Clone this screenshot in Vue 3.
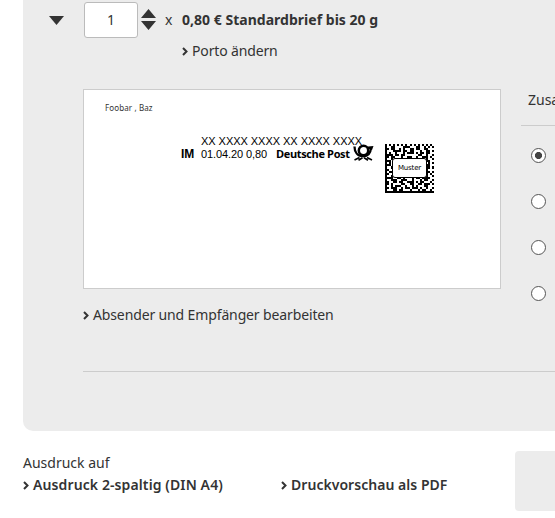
<script setup>
const matrix = [
  '#.#.#.#.#.#.#.#.#.#.#.#.',
  '#..##....###...##..#.#.#',
  '##.##..#.#..##.##..##...',
  '#...####.##.##...#..##.#',
  '#.#..#...#.###.#.##.##..',
  '####.##.##......##..#..#',
  '##.##...#..##..#..###.#.',
  '#..#................#..#',
  '###.................##..',
  '#.#..................#.#',
  '###.................##..',
  '#..#................##.#',
  '##..................#...',
  '#.##................##.#',
  '##..................#.#.',
  '#..#................#..#',
  '####..##.#...#.##.####..',
  '#..###..###..#...#.##..#',
  '##..##.##..###.#.##...#.',
  '##.#....##..##..##.###.#',
  '#..#.###..#..#.#...##...',
  '##.###..#.##.###.#..#..#',
  '#...##.##...#...#.##..#.',
  '########################',
]
const modules = matrix
  .flatMap((row, y) => [...row].map((c, x) => (c === '#' ? `M${x} ${y}h1v1h-1z` : '')))
  .join('')
</script>

<template>
  <main class="page">
    <section class="panel">
      <div class="product">
        <svg class="toggle" viewBox="0 0 15 9"><path d="M0 0h15L7.5 9z" /></svg>
        <div class="qty">1</div>
        <svg class="spin" viewBox="0 0 15 21"><path d="M0 9 7.5 0 15 9zM0 12h15l-7.500 9z" /></svg>
        <span class="times">x</span>
        <strong class="name">0,80 € Standardbrief bis 20 g</strong>
      </div>
      <a class="link porto"><svg class="chev" viewBox="0 0 6 9"><path d="M1 1l3.500 3.500L1 8" /></svg><span>Porto ändern</span></a>
      <div class="content">
        <div class="letter">
          <div class="sender">Foobar , Baz</div>
          <div class="franking">
            <div class="marks">
              <div class="code">XX XXXX XXXX XX XXXX XXXX</div>
              <div class="postline">
                <b class="im">IM</b><span class="date">01.04.20 0,80</span><b class="brand">Deutsche Post</b>
                <svg class="horn" viewBox="0 0 20 17">
                  <path d="M1 2.500C1 8 4 12 9 12.200C14 12.500 17 9.500 17.500 4" fill="none" stroke="#000" stroke-width="2.300" />
                  <path d="M14 4.500L14.500 2.500 20 2 18.500 6z" />
                  <circle cx="10" cy="6.500" r="4.700" fill="none" stroke="#000" stroke-width="2.500" />
                  <path d="M1 16l5-2.500M5 16.300l4-2.500M10.500 13.800l4 2.500M13.500 13.500l5 2.500" stroke="#000" stroke-width="1.600" />
                </svg>
              </div>
            </div>
            <div class="matrix">
              <svg viewBox="0 0 24 24" shape-rendering="crispEdges"><path :d="modules" /></svg>
              <span>Muster</span>
            </div>
          </div>
        </div>
        <aside class="extras">
          <h2>Zusatzleistungen</h2>
          <div class="options">
            <i class="radio on"></i><i class="radio"></i><i class="radio"></i><i class="radio"></i>
          </div>
        </aside>
      </div>
      <a class="link edit"><svg class="chev" viewBox="0 0 6 9"><path d="M1 1l3.500 3.500L1 8" /></svg><span>Absender und Empfänger bearbeiten</span></a>
      <div class="rule"></div>
    </section>
    <footer class="footer">
      <div class="print">
        <div class="label">Ausdruck auf</div>
        <a class="link strong two"><svg class="chev" viewBox="0 0 6 9"><path d="M1 1l3.500 3.500L1 8" /></svg><span>Ausdruck 2-spaltig (DIN A4)</span></a>
      </div>
      <a class="link strong preview"><svg class="chev" viewBox="0 0 6 9"><path d="M1 1l3.500 3.500L1 8" /></svg><span>Druckvorschau als PDF</span></a>
      <div class="box"></div>
    </footer>
  </main>
</template>

<style>
body { background: #fff; overflow: hidden; }
</style>
<style scoped>
* { box-sizing: border-box; }
.page { width: 555px; height: 518px; overflow: hidden; font: 14px/20px "Noto Sans", sans-serif; color: #333; white-space: nowrap; }
.panel { margin-left: 23px; height: 431px; background: #ececec; border-radius: 0 0 0 10px; padding-top: 2px; overflow: hidden; }
svg { display: block; flex: none; }
.product { display: flex; align-items: center; height: 36px; padding-left: 26px; }
.toggle { width: 15px; height: 9px; fill: #333; }
.qty { width: 54px; height: 36px; margin-left: 20px; border: 1px solid #bbb; border-radius: 3px; background: #fff; text-align: center; line-height: 34px; }
.spin { width: 15px; height: 21px; margin: -1px 0 0 3px; fill: #333; }
.times { width: 17px; margin-left: 9px; }
.name { letter-spacing: 0.02px; }
.link { display: flex; align-items: center; height: 20px; }
.chev { width: 6px; height: 9px; margin-right: 4px; fill: none; stroke: #333; stroke-width: 2; }
.porto { margin: 3px 0 0 159px; letter-spacing: -0.15px; }
.content { display: flex; height: 200px; margin: 28px 0 0 60px; }
.letter { width: 418px; height: 200px; flex: none; border: 1px solid #ccc; background: #fff; padding: 12px 0 0 21px; }
.sender { font-size: 8px; line-height: 12px; letter-spacing: 0.12px; }
.franking { display: flex; padding-left: 76px; margin-top: 20px; color: #000; }
.marks { width: 204px; }
.code { font: 11px/13px "Liberation Sans", sans-serif; letter-spacing: -0.04px; padding: 1px 0 0 20px; }
.postline { display: flex; height: 17px; font: 11px/13px "Liberation Sans", sans-serif; }
.im { width: 20px; font-size: 12px; line-height: 12px; }
.date { width: 75px; letter-spacing: -0.1px; line-height: 12px; }
.brand { width: 76px; font-family: "Open Sans", sans-serif; letter-spacing: -0.36px; line-height: 12px; }
.horn { width: 21px; height: 17px; margin: -4px 0 0 1px; }
.matrix { width: 49px; height: 49px; margin-top: 10px; position: relative; }
.matrix svg { width: 49px; height: 49px; }
.matrix span { position: absolute; left: 7px; top: 14px; width: 35px; height: 20px; border: 1px solid #000; border-radius: 3px; background: #fff; font: 7px/18px "DejaVu Sans", sans-serif; letter-spacing: -0.15px; text-align: center; }
.extras { margin-left: 20px; flex: 1; }
h2 { margin: 0; font-size: 14px; font-weight: 400; line-height: 20px; padding: 1px 0 0 7px; height: 37px; border-bottom: 1px solid #ccc; overflow: hidden; }
.options { display: flex; flex-direction: column; gap: 31px; padding: 22px 0 0 10px; }
.radio { width: 15px; height: 15px; border: 1px solid #555; border-radius: 50%; background: #fff; }
.on { background: radial-gradient(circle, #444 3.300px, #fff 3.800px); }
.edit { margin: 16px 0 0 60px; letter-spacing: -0.13px; }
.rule { margin: 46px 0 0 60px; border-top: 1px solid #ccc; }
.footer { display: flex; padding: 20px 0 0 23px; }
.print { width: 258px; padding-top: 2px; }
.label { height: 22px; }
.strong { font-weight: 600; }
.two { letter-spacing: 0.11px; }
.preview { margin-top: 24px; width: 234px; letter-spacing: 0.04px; }
.box { width: 40px; height: 60px; background: #ececec; border-radius: 4px 0 0 4px; }
</style>
